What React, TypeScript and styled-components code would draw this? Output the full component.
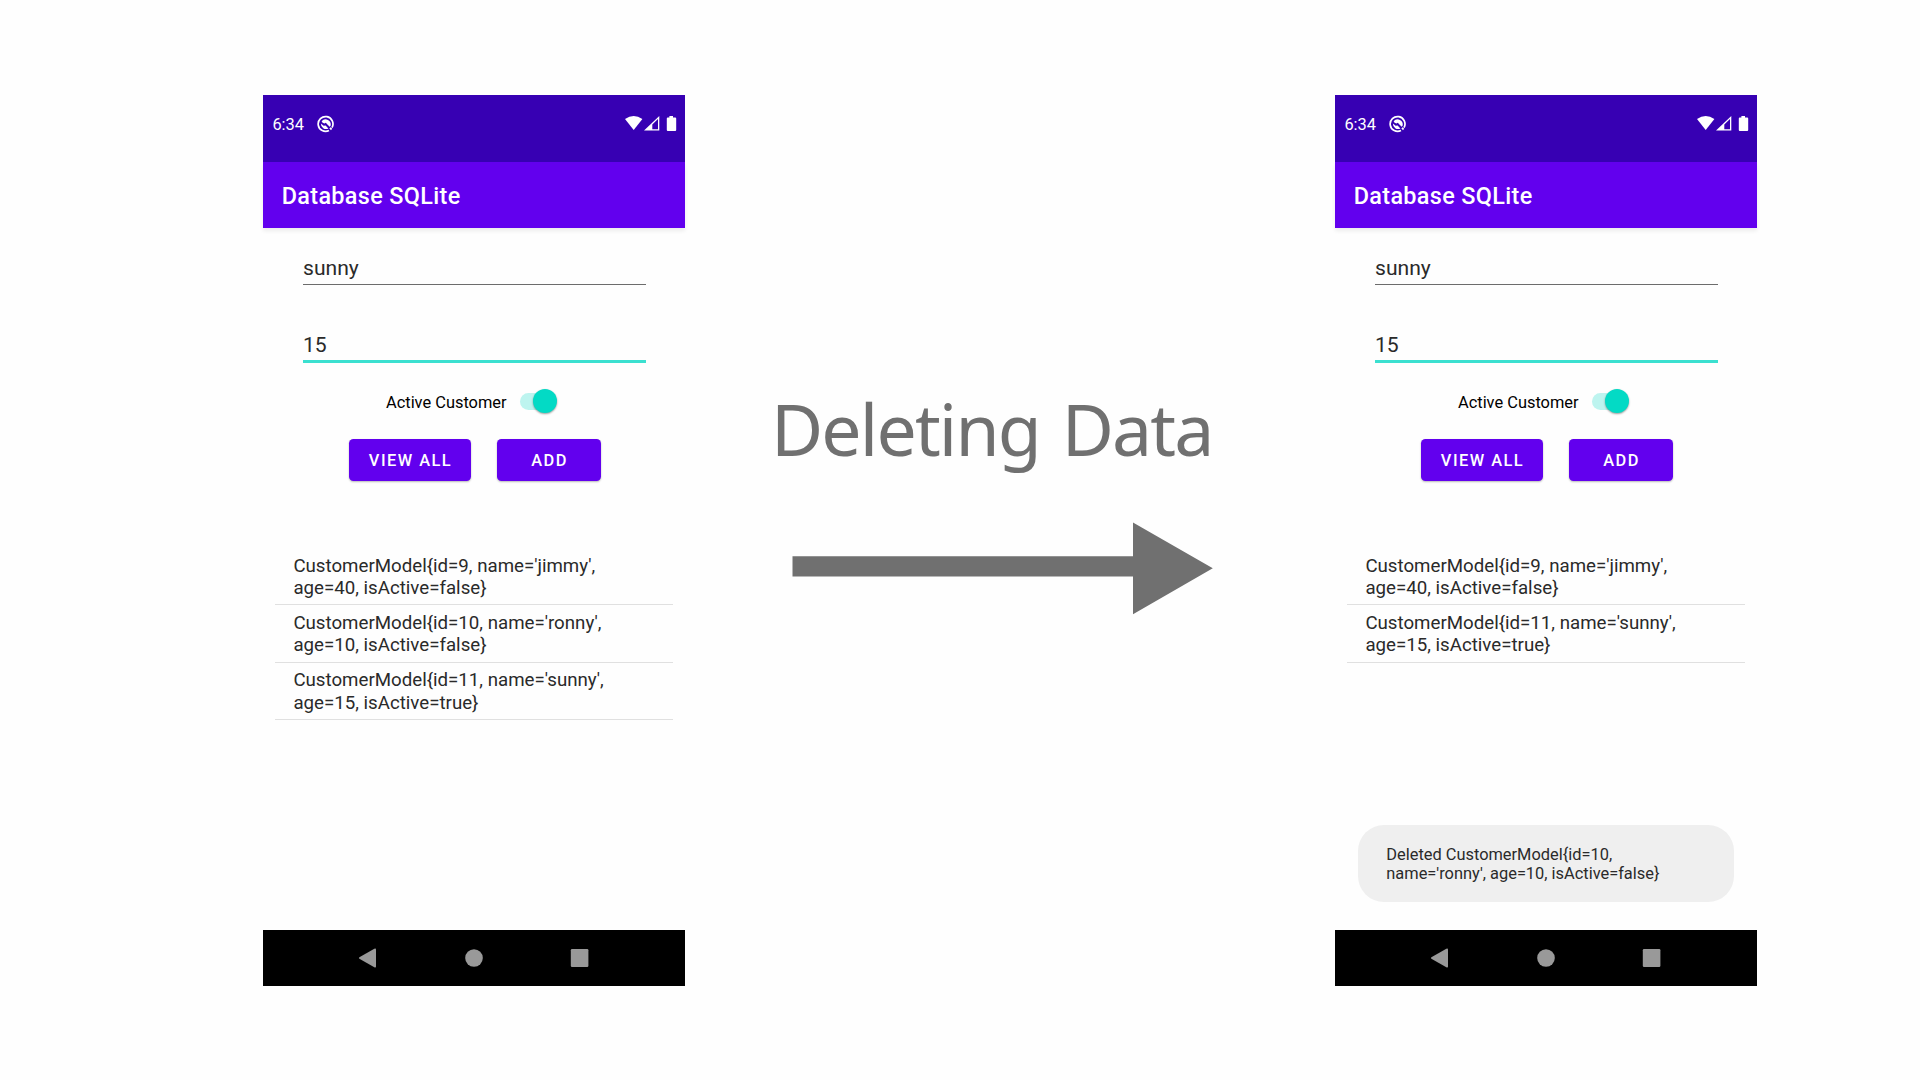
import React from "react";
import styled, { createGlobalStyle } from "styled-components";

const GlobalStyle = createGlobalStyle`
  * { box-sizing: border-box; }
  html, body { margin: 0; padding: 0; background: #fefefe; }
  body { width: 1920px; height: 1080px; overflow: hidden; font-family: Roboto, "Liberation Sans", sans-serif; }
`;

const Stage = styled.main`
  display: grid;
  grid-template-columns: 422px 650px 422px;
  justify-content: start;
  padding: 95px 0 0 263px;
  height: 1080px;
`;

const Phone = styled.section`
  display: flex;
  flex-direction: column;
  height: 891px;
  background: #fefefe;
`;

const StatusBar = styled.header`
  display: flex;
  align-items: flex-start;
  height: 67px;
  padding: 20px 8.5px 0 9.4px;
  background: #3700b3;
  color: #fff;
`;

const Clock = styled.span`
  font-size: 16.4px;
  line-height: 20px;
  width: 44.6px;
`;

const StatusIcons = styled.div`
  display: flex;
  margin-left: auto;
`;

const AppBar = styled.div`
  display: flex;
  align-items: center;
  height: 65.5px;
  padding: 3px 0 0 18.7px;
  background: #6200ee;
  box-shadow: 0 3px 4px rgba(0, 0, 0, 0.07);
  color: #fff;
`;

const Title = styled.h1`
  margin: 0;
  font-size: 23.4px;
  font-weight: 500;
  line-height: 28px;
  letter-spacing: 0.35px;
`;

const Content = styled.div`
  display: flex;
  flex-direction: column;
  flex: 1;
`;

const Field = styled.div<{ $focused?: boolean }>`
  height: ${(p) => (p.$focused ? 41 : 39)}px;
  margin: ${(p) => (p.$focused ? "37px" : "18.5px")} 39px 0 40px;
  border-bottom: ${(p) => (p.$focused ? "3px solid #3be0d0" : "1px solid #6c6c6c")};
  font-size: 21.1px;
  line-height: ${(p) => (p.$focused ? 45 : 44)}px;
  color: #2a2a2a;
`;

const SwitchRow = styled.label`
  display: flex;
  align-items: center;
  height: 30px;
  margin: 24px 0 0 123px;
  font-size: 16.4px;
  color: #000;
`;

const SwitchTrack = styled.span`
  display: flex;
  justify-content: flex-end;
  align-items: center;
  width: 37px;
  height: 17px;
  margin: 0 0 2px 13.5px;
  border-radius: 9px;
  background: linear-gradient(to right, #bdf4ef 28px, transparent 28px);
`;

const SwitchThumb = styled.span`
  width: 24px;
  height: 24px;
  flex: none;
  border-radius: 50%;
  background: #03dac5;
  box-shadow: 0 1px 2px rgba(0, 0, 0, 0.4);
`;

const Buttons = styled.div`
  display: flex;
  gap: 26.3px;
  margin: 22px 0 0 86px;
`;

const Button = styled.button<{ $width: number }>`
  width: ${(p) => p.$width}px;
  height: 42px;
  padding: 0.5px 0 0 1px;
  border: 0;
  border-radius: 4.5px;
  background: #6200ee;
  box-shadow: 0 1px 2px rgba(0, 0, 0, 0.28);
  color: #fff;
  font: 500 16.4px Roboto, sans-serif;
  letter-spacing: 0.0893em;
`;

const List = styled.ul`
  list-style: none;
  margin: 67px 12px 0 11.5px;
  padding: 0;
`;

const Row = styled.li`
  height: 57.4px;
  padding: 6.7px 0 0 18.9px;
  border-bottom: 1px solid #e0e0e0;
  font-size: 18.7px;
  line-height: 22.4px;
  color: #2a2a2a;
  white-space: pre-line;
`;

const Toast = styled.div`
  width: 376px;
  height: 77px;
  margin: auto 0 28px 23px;
  padding: 20px 0 0 28.3px;
  border-radius: 26px;
  background: #efefef;
  font-size: 16.4px;
  line-height: 19.3px;
  color: #2a2a2a;
  white-space: pre-line;
`;

const NavBar = styled.nav`
  display: flex;
  height: 56.5px;
  background: #000;
`;

const Middle = styled.div`
  display: flex;
  flex-direction: column;
`;

const Caption = styled.h2`
  margin: 284px 0 0 86px;
  font: 400 71.5px/100px "Noto Sans", sans-serif;
  letter-spacing: -1.85px;
  word-spacing: 5px;
  color: #707070;
  white-space: nowrap;
`;

const Arrow = styled.svg`
  margin: 43px 0 0 107px;
`;

type PhoneProps = { rows: string[]; toast?: string };

function PhoneScreen({ rows, toast }: PhoneProps) {
  return (
    <Phone>
      <StatusBar>
        <Clock>6:34</Clock>
        <svg width="18" height="18" viewBox="0 0 18 18" fill="none">
          <path d="M12 15.5 A7.4 7.4 0 1 1 15 12.6" stroke="#fff" strokeWidth="1.7" />
          <path d="M4.6 6.2 A5.2 5.2 0 0 1 13.6 10.8 L12.6 11.8 L8.8 7.8 L7.4 8.4 L5.6 7.8Z" fill="#fff" />
          <path d="M3.9 8.6 A5.1 5.1 0 0 0 11.4 13.4 L8.6 10.4 L6.6 10.8Z" fill="#fff" />
          <path d="M13 12.9 L14.6 14.5" stroke="#fff" strokeWidth="1.8" />
        </svg>
        <StatusIcons>
          <svg width="52" height="18" viewBox="0 0 52 18" fill="#fff">
            <path d="M0 4 Q8.7 -2.2 17.4 4 L8.7 15Z" />
            <path fillRule="evenodd" d="M34.3 1 V15.5 H19Z M33 4.1 L27.3 9.6 V14.2 H33Z" />
            <path d="M44.4 1 H48 V2.4 H50.2 Q51.2 2.4 51.2 3.4 V15 Q51.2 16 50.2 16 H42.8 Q41.8 16 41.8 15 V3.4 Q41.8 2.4 42.8 2.4 H44.4Z" />
          </svg>
        </StatusIcons>
      </StatusBar>
      <AppBar>
        <Title>Database SQLite</Title>
      </AppBar>
      <Content>
        <Field>sunny</Field>
        <Field $focused>15</Field>
        <SwitchRow>
          Active Customer
          <SwitchTrack>
            <SwitchThumb />
          </SwitchTrack>
        </SwitchRow>
        <Buttons>
          <Button $width={122}>VIEW ALL</Button>
          <Button $width={103.5}>ADD</Button>
        </Buttons>
        <List>
          {rows.map((row) => (
            <Row key={row}>{row}</Row>
          ))}
        </List>
        {toast && <Toast>{toast}</Toast>}
      </Content>
      <NavBar>
        <svg width="422" height="56" viewBox="0 0 422 56" fill="#999">
          <path d="M96.4 27.3 L111.3 18.7 Q113 18 113 19.5 V36.5 Q113 38 111.3 37.2 L96.4 28.8 Q95.4 28 96.4 27.3Z" />
          <circle cx="211" cy="28" r="8.8" />
          <rect x="307.8" y="19" width="17.6" height="18" rx="1.2" />
        </svg>
      </NavBar>
    </Phone>
  );
}

const jimmy = "CustomerModel{id=9, name='jimmy',\nage=40, isActive=false}";
const ronny = "CustomerModel{id=10, name='ronny',\nage=10, isActive=false}";
const sunny = "CustomerModel{id=11, name='sunny',\nage=15, isActive=true}";

export default function App() {
  return (
    <>
      <GlobalStyle />
      <Stage>
        <PhoneScreen rows={[jimmy, ronny, sunny]} />
        <Middle>
          <Caption>Deleting Data</Caption>
          <Arrow width="422" height="94" viewBox="0 0 422 94" fill="#707070">
            <path d="M0.5 34.3 H341 V0.5 L420.8 46.3 L341 92.3 V54.5 H0.5Z" />
          </Arrow>
        </Middle>
        <PhoneScreen
          rows={[jimmy, sunny]}
          toast={"Deleted CustomerModel{id=10,\nname='ronny', age=10, isActive=false}"}
        />
      </Stage>
    </>
  );
}
